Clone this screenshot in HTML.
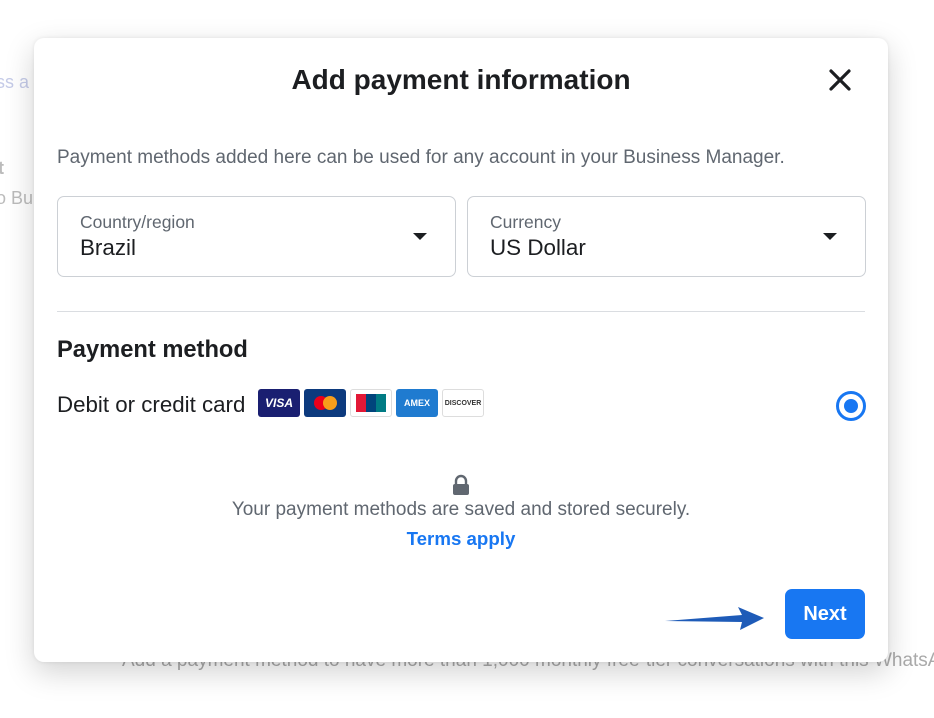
<!DOCTYPE html>
<html><head><meta charset="utf-8"><style>
*{margin:0;padding:0;box-sizing:border-box}
body{width:934px;height:718px;background:#fff;font-family:"Liberation Sans",Arial,sans-serif;position:relative;overflow:hidden;color:#1c1e21}
.bg{position:absolute;color:#ccd0d5;font-size:18px;white-space:nowrap}
.modal{position:absolute;left:34px;top:38px;width:854px;height:624px;background:#fff;border-radius:10px;box-shadow:0 10px 30px rgba(0,0,0,.18),0 0 4px rgba(0,0,0,.08)}
.abs{position:absolute;white-space:nowrap}
.sel{position:absolute;top:158px;width:399px;height:81px;border:1px solid #ccd0d5;border-radius:7px}
.sel .l{position:absolute;left:22px;top:15px;font-size:17.5px;color:#606770}
.sel .v{position:absolute;left:22px;top:38px;font-size:22.4px;color:#1c1e21}
.sel .a{position:absolute;right:28px;top:36px;width:0;height:0;border-left:7px solid transparent;border-right:7px solid transparent;border-top:7px solid #1c1e21}
.card{position:absolute;top:351px;width:42px;height:28px;border-radius:3px;font-size:10px;font-weight:bold;display:flex;align-items:center;justify-content:center}
</style></head><body>
<div class="bg" style="left:-4px;top:72px;color:#c5cbe8">ss a</div>
<div class="bg" style="left:-2px;top:158px;font-weight:bold;color:#bbb">t</div>
<div class="bg" style="left:-4px;top:188px;color:#bbb">o Bu</div>
<div class="bg" style="left:122px;top:650px;color:#aaa;font-size:19px">Add a payment method to have more than 1,000 monthly free-tier conversations with this WhatsApp</div>
<div class="modal">
<div class="abs" style="left:0;width:854px;top:26px;text-align:center;font-size:28px;font-weight:bold">Add payment information</div>
<svg class="abs" style="left:795px;top:31px" width="22" height="22" viewBox="0 0 22 22"><path d="M2 2L20 20M20 2L2 20" stroke="#1c1e21" stroke-width="3.2" stroke-linecap="round"/></svg>
<div class="abs" style="left:23px;top:109px;font-size:19px;color:#606770">Payment methods added here can be used for any account in your Business Manager.</div>
<div class="sel" style="left:23px"><div class="l">Country/region</div><div class="v">Brazil</div><div class="a"></div></div>
<div class="sel" style="left:433px"><div class="l">Currency</div><div class="v">US Dollar</div><div class="a"></div></div>
<div class="abs" style="left:23px;top:273px;width:808px;height:1px;background:#dadde1"></div>
<div class="abs" style="left:23px;top:299px;font-size:23.7px;font-weight:bold">Payment method</div>
<div class="abs" style="left:23px;top:354px;font-size:22.3px">Debit or credit card</div>
<div class="card" style="left:224px;background:#1a1f71;color:#fff;font-size:12px;font-style:italic">VISA</div>
<div class="card" style="left:270px;background:#0c3a7e"><span style="width:14px;height:14px;border-radius:50%;background:#eb001b"></span><span style="width:14px;height:14px;border-radius:50%;background:#f79e1b;margin-left:-5px"></span></div>
<div class="card" style="left:316px;border:1px solid #ddd;background:#fff"><span style="width:30px;height:18px;background:linear-gradient(90deg,#e21836 33%,#00447c 33% 66%,#007b84 66%)"></span></div>
<div class="card" style="left:362px;background:#1f7bd0;color:#fff;font-size:9px">AMEX</div>
<div class="card" style="left:408px;border:1px solid #ddd;background:#fff;color:#333;font-size:7px">DISCOVER</div>
<div class="abs" style="left:802px;top:353px;width:30px;height:30px;border-radius:50%;border:3px solid #1877f2;background:#fff"><div style="position:absolute;left:5px;top:5px;width:14px;height:14px;border-radius:50%;background:#1877f2"></div></div>
<svg class="abs" style="left:417px;top:436px" width="20" height="22" viewBox="0 0 20 22"><path d="M5 10V7a5 5 0 0 1 10 0v3" fill="none" stroke="#606770" stroke-width="2.4"/><rect x="2" y="10" width="16" height="11" rx="2" fill="#606770"/></svg>
<div class="abs" style="left:0;width:854px;top:461px;text-align:center;font-size:19px;color:#606770">Your payment methods are saved and stored securely.</div>
<div class="abs" style="left:0;width:854px;top:490px;text-align:center;font-size:18.7px;font-weight:bold;color:#1877f2">Terms apply</div>
<svg class="abs" style="left:628px;top:565px" width="104" height="30" viewBox="0 0 104 30"><path d="M3 18 L80 12 L76 4 L102 15 L78 27 L80 19 Z" fill="#1e5bb8"/></svg>
<div class="abs" style="left:751px;top:551px;width:80px;height:50px;border-radius:7px;background:#1877f2;color:#fff;font-size:20px;font-weight:bold;text-align:center;line-height:50px">Next</div>
</div>
</body></html>
